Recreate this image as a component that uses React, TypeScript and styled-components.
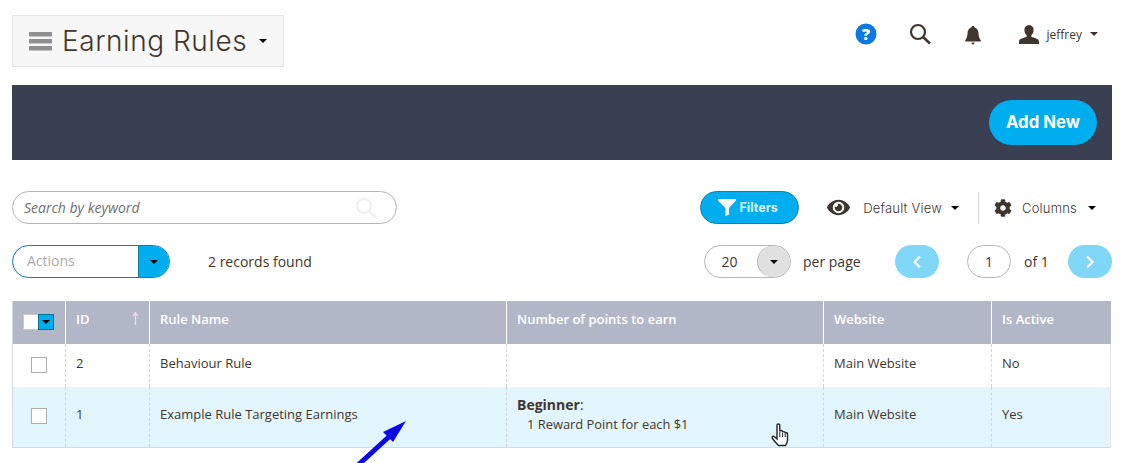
import React from 'react';
import styled, { createGlobalStyle } from 'styled-components';
import { FaCog, FaEye } from 'react-icons/fa';

const GlobalStyle = createGlobalStyle`
  html, body {
    margin: 0;
    padding: 0;
    background: #fff;
    overflow: hidden;
  }
  body {
    font-family: "Open Sans", "Liberation Sans", sans-serif;
    color: #41362f;
  }
  * { box-sizing: border-box; }
`;

const columns = [52, 84, 357, 317, 168, 120];

function Caret({ size = 5, color = '#000' }: { size?: number; color?: string }) {
  return (
    <svg width={size * 2} height={size} viewBox="0 0 10 5" style={{ display: 'block', flex: 'none' }}>
      <path d="M0 0h10L5 5z" fill={color} />
    </svg>
  );
}

export default function App() {
  return (
    <>
      <GlobalStyle />
      <Page>
        <Header>
          <TitleBox>
            <svg width="23" height="20" viewBox="0 0 23 20">
              <path d="M0 1h23v4.500H0zM0 8h23v4.500H0zM0 15h23v4.500H0z" fill="#8f8f8f" />
            </svg>
            <Title>Earning Rules</Title>
            <Caret size={4} />
          </TitleBox>
          <HeaderTools>
            <svg width="22" height="22" viewBox="0 0 22 22">
              <circle cx="11" cy="11" r="10.500" fill="#0b78e3" />
              <text x="11" y="16.500" textAnchor="middle" fontSize="16" fontWeight="800" fontFamily="Open Sans" fill="#fff">?</text>
            </svg>
            <SearchTool>
              <svg width="22" height="22" viewBox="0 0 22 22" fill="none" stroke="#41362f">
                <circle cx="9" cy="9" r="7" strokeWidth="2.200" />
                <path d="M14 14l7 6.500" strokeWidth="2.600" />
              </svg>
            </SearchTool>
            <BellTool>
              <svg width="16" height="19" viewBox="0 0 16 19" fill="#41362f">
                <path d="M8 0c1 0 1.600.6 1.600 1.600C12.200 2.400 13.400 4.600 13.500 7.500c.1 3 .8 5 2.300 6.700V15.500H.2v-1.300C1.700 12.500 2.400 10.500 2.500 7.500 2.600 4.600 3.800 2.400 6.400 1.600 6.400.6 7 0 8 0z" />
                <path d="M6.500 16.500h3C9.500 17.700 8.800 18.500 8 18.500s-1.500-.8-1.500-2z" />
              </svg>
            </BellTool>
            <UserTool>
              <svg width="20" height="19" viewBox="0 0 20 19" fill="#41362f">
                <path d="M10 0c3 0 4.600 2.200 4.600 5 0 2.300-1 4.300-2.300 5.300v1.500c2.700 1.200 7.700 1.600 7.700 4.700V19H0v-2.500c0-3.100 5-3.500 7.700-4.700v-1.500C6.400 9.300 5.400 7.300 5.400 5 5.400 2.200 7 0 10 0z" />
              </svg>
              <UserName>jeffrey</UserName>
              <Caret size={4} color="#41362f" />
            </UserTool>
          </HeaderTools>
        </Header>

        <ActionBar>
          <AddButton>Add New</AddButton>
        </ActionBar>

        <FilterRow>
          <SearchBox>
            <SearchText>Search by keyword</SearchText>
            <svg width="22" height="22" viewBox="0 0 22 22" fill="none" stroke="#f0f1f3">
              <circle cx="9" cy="9" r="7" strokeWidth="2.600" />
              <path d="M14 14l6.500 6.500" strokeWidth="3" />
            </svg>
          </SearchBox>
          <FilterTools>
            <FiltersButton>
              <svg width="18" height="17" viewBox="0 0 18 17" fill="#fff">
                <path d="M0 0h18v1.500L11 9v6.500L7.500 17V9L0 1.500z" />
              </svg>
              Filters
            </FiltersButton>
            <ViewSelect>
              <FaEye size={23} color="#41362f" />
              <ToolLabel>Default View</ToolLabel>
              <Caret size={4} />
            </ViewSelect>
            <ToolDivider />
            <ColumnsSelect>
              <FaCog size={18} color="#41362f" />
              <ToolLabel>Columns</ToolLabel>
              <Caret size={4} />
            </ColumnsSelect>
          </FilterTools>
        </FilterRow>

        <PagerRow>
          <ActionsSelect>
            <ActionsLabel>Actions</ActionsLabel>
            <ActionsButton>
              <Caret size={4} />
            </ActionsButton>
          </ActionsSelect>
          <RecordsText>2 records found</RecordsText>
          <Pager>
            <PerPage>
              <PerPageValue>20</PerPageValue>
              <PerPageButton>
                <Caret size={4} />
              </PerPageButton>
            </PerPage>
            <PerPageLabel>per page</PerPageLabel>
            <PageButton>
              <svg width="10" height="14" viewBox="0 0 10 14" fill="none" stroke="#fff" strokeWidth="2.200">
                <path d="M8 1.500L2.500 7 8 12.500" />
              </svg>
            </PageButton>
            <PageInput>1</PageInput>
            <PageTotal>of 1</PageTotal>
            <PageButton>
              <svg width="10" height="14" viewBox="0 0 10 14" fill="none" stroke="#fff" strokeWidth="2.200">
                <path d="M2 1.500L7.500 7 2 12.500" />
              </svg>
            </PageButton>
          </Pager>
        </PagerRow>

        <Grid>
          <colgroup>
            {columns.map((width, i) => (
              <col key={i} style={{ width }} />
            ))}
          </colgroup>
          <thead>
            <tr>
              <HeadCell>
                <MassSelect>
                  <MassBox />
                  <MassButton>
                    <Caret size={4} />
                  </MassButton>
                </MassSelect>
              </HeadCell>
              <HeadCell>
                <IdHead>
                  ID
                  <svg width="7" height="14" viewBox="0 0 7 14" fill="none" stroke="#f9d9e4" strokeWidth="1.200">
                    <path d="M3.500 13V1M1 4l2.500-3L6 4" />
                  </svg>
                </IdHead>
              </HeadCell>
              <HeadCell>Rule Name</HeadCell>
              <HeadCell>Number of points to earn</HeadCell>
              <HeadCell>Website</HeadCell>
              <HeadCell>Is Active</HeadCell>
            </tr>
          </thead>
          <tbody>
            <Row $height={43}>
              <Cell><CheckBox /></Cell>
              <Cell>2</Cell>
              <Cell>Behaviour Rule</Cell>
              <Cell />
              <Cell>Main Website</Cell>
              <Cell>No</Cell>
            </Row>
            <Row $height={60} $hover>
              <Cell><CheckBox /></Cell>
              <Cell>1</Cell>
              <Cell>Example Rule Targeting Earnings</Cell>
              <Cell>
                <TierName><strong>Beginner</strong>:</TierName>
                <TierRule>1 Reward Point for each $1</TierRule>
              </Cell>
              <Cell>Main Website</Cell>
              <Cell>Yes</Cell>
            </Row>
          </tbody>
        </Grid>

        <BlueArrow width="60" height="50" viewBox="0 0 60 50">
          <path d="M0 47L36 14" stroke="#0a0ae6" strokeWidth="5" />
          <path d="M50 1L27 12l10 10z" fill="#0a0ae6" />
        </BlueArrow>
        <HandCursor width="19" height="25" viewBox="0 0 19 25">
          <path
            d="M6 2.500c0-2 2.800-2 2.800 0v6c.2-1.400 2.600-1.400 2.800 0v1c.2-1.200 2.400-1.200 2.600 0.200v.8c.3-1.100 2.300-1 2.300.5v6c0 2.500-1 3.700-2 5.500H7.500C5.500 20.500 3.500 18.500 1.500 15.500c-1-1.500.7-3 2-1.800L6 16z"
            fill="#fff"
            stroke="#20242c"
            strokeWidth="1.400"
          />
          <path d="M8.800 9v5M11.600 10v4M14.200 11v3" fill="none" stroke="#20242c" strokeWidth="1" />
        </HandCursor>
      </Page>
    </>
  );
}

const Page = styled.div`
  position: relative;
  width: 1127px;
  height: 463px;
  padding: 15px 15px 0 12px;
  overflow: hidden;
`;

const Header = styled.header`
  display: flex;
  justify-content: space-between;
  align-items: flex-start;
  height: 52px;
`;

const TitleBox = styled.div`
  width: 272px;
  height: 52px;
  display: flex;
  align-items: center;
  padding-left: 16px;
  background: #f7f7f7;
  border: 1px solid #e3e3e3;
`;

const Title = styled.h1`
  margin: 0 12px 0 10px;
  font-family: Inter, "Noto Sans", sans-serif;
  font-size: 28px;
  font-weight: 300;
  line-height: 1;
  letter-spacing: 0.55px;
  color: #41362f;
`;

const HeaderTools = styled.div`
  display: flex;
  align-items: center;
  height: 38px;
  padding-right: 14px;
`;

const SearchTool = styled.span`
  display: block;
  height: 22px;
  margin-left: 32px;
`;

const BellTool = styled.span`
  display: block;
  height: 19px;
  margin-left: 34px;
  padding-top: 1px;
`;

const UserTool = styled.div`
  display: flex;
  align-items: center;
  margin-left: 38px;
`;

const UserName = styled.span`
  margin: 0 8px;
  font-size: 12px;
  color: #41362f;
`;

const ActionBar = styled.div`
  height: 75px;
  margin-top: 18px;
  display: flex;
  justify-content: flex-end;
  align-items: center;
  padding-right: 15px;
  background: #3b3f52;
`;

const AddButton = styled.button`
  width: 108px;
  height: 45px;
  padding: 0 0 1px;
  border: 0;
  border-radius: 23px;
  background: #00aeef;
  color: #fff;
  font-family: Inter, "Noto Sans", sans-serif;
  font-size: 16.800px;
  font-weight: 700;
`;

const FilterRow = styled.div`
  display: flex;
  justify-content: space-between;
  align-items: center;
  height: 33px;
  margin-top: 31px;
`;

const SearchBox = styled.div`
  width: 385px;
  height: 33px;
  display: flex;
  justify-content: space-between;
  align-items: center;
  padding: 0 19px 0 11px;
  border: 1px solid #b5b5b5;
  border-radius: 17px;
`;

const SearchText = styled.span`
  font-size: 14px;
  font-style: italic;
  color: #6f6f75;
`;

const FilterTools = styled.div`
  display: flex;
  align-items: center;
  padding-right: 16px;
`;

const FiltersButton = styled.button`
  width: 99px;
  height: 33px;
  display: flex;
  justify-content: center;
  align-items: center;
  gap: 4px;
  padding: 0 4px 0 0;
  border: 1px solid #0b7fb0;
  border-radius: 17px;
  background: #00aeef;
  color: #d8f3fd;
  font-family: Inter, "Noto Sans", sans-serif;
  font-size: 12.500px;
  font-weight: 700;
`;

const ViewSelect = styled.div`
  display: flex;
  align-items: center;
  margin-left: 28px;
  & > span { margin: 0 9px 0 13px; }
`;

const ToolLabel = styled.span`
  font-family: Inter, "Noto Sans", sans-serif;
  font-size: 13px;
  font-weight: 300;
  letter-spacing: 0.2px;
  color: #41362f;
`;

const ToolDivider = styled.span`
  width: 1px;
  height: 32px;
  margin: 0 15px 0 19px;
  background: #d5d5d5;
`;

const ColumnsSelect = styled.div`
  display: flex;
  align-items: center;
  & > span { margin: 0 11px 0 10px; }
`;

const PagerRow = styled.div`
  display: flex;
  align-items: center;
  height: 33px;
  margin-top: 21px;
`;

const ActionsSelect = styled.div`
  width: 158px;
  height: 33px;
  display: flex;
  border: 1px solid #0b7fa8;
  border-radius: 17px;
  overflow: hidden;
`;

const ActionsLabel = styled.span`
  flex: 1;
  padding-left: 14px;
  font-size: 14px;
  line-height: 30px;
  color: #a9a9ad;
`;

const ActionsButton = styled.span`
  width: 31px;
  display: flex;
  justify-content: center;
  align-items: center;
  background: #00aeef;
  border-left: 1px solid #0b7fa8;
`;

const RecordsText = styled.span`
  margin-left: 38px;
  font-size: 14px;
  color: #41362f;
`;

const Pager = styled.div`
  display: flex;
  align-items: center;
  margin-left: auto;
`;

const PerPage = styled.div`
  width: 87px;
  height: 33px;
  display: flex;
  border: 1px solid #b5b5b5;
  border-radius: 17px;
  overflow: hidden;
`;

const PerPageValue = styled.span`
  flex: 1;
  text-align: center;
  padding-right: 3px;
  font-size: 14px;
  line-height: 31px;
  color: #41362f;
`;

const PerPageButton = styled.span`
  width: 33px;
  display: flex;
  justify-content: center;
  align-items: center;
  background: #e0e0e0;
  border-left: 1px solid #b5b5b5;
  border-radius: 17px;
`;

const PerPageLabel = styled.span`
  width: 92px;
  margin-left: 12px;
  font-size: 14px;
  color: #41362f;
`;

const PageButton = styled.button`
  width: 44px;
  height: 33px;
  display: flex;
  justify-content: center;
  align-items: center;
  padding: 0;
  border: 0;
  border-radius: 17px;
  background: #80d6f7;
`;

const PageInput = styled.span`
  width: 44px;
  height: 33px;
  margin-left: 28px;
  border: 1px solid #b5b5b5;
  border-radius: 17px;
  text-align: center;
  font-size: 14px;
  line-height: 31px;
  color: #41362f;
`;

const PageTotal = styled.span`
  width: 44px;
  margin-left: 13px;
  font-size: 14px;
  color: #41362f;
`;

const Grid = styled.table`
  width: 1099px;
  margin-top: 23px;
  border-collapse: separate;
  border-spacing: 0;
  table-layout: fixed;
  border-bottom: 1px solid #d5d8df;
  border-left: 1px solid #d5d8df;
`;

const HeadCell = styled.th`
  height: 43px;
  padding: 0 10px 7px;
  background: #b2b7c8;
  border-left: 1px solid #fff;
  color: #fff;
  font-size: 13px;
  font-weight: 600;
  text-align: left;
  &:first-child { border-left: 0; padding-bottom: 1px; }
`;

const IdHead = styled.span`
  display: flex;
  justify-content: space-between;
  align-items: center;
`;

const MassSelect = styled.span`
  display: flex;
  width: 31px;
  height: 16px;
`;

const MassBox = styled.span`
  flex: 1;
  background: #fff;
  border: 1px solid #c8c8c8;
  border-right: 0;
`;

const MassButton = styled.span`
  width: 16px;
  display: flex;
  justify-content: center;
  align-items: center;
  background: #00aeef;
  border: 1px solid #0b6f98;
`;

const Row = styled.tr<{ $height: number; $hover?: boolean }>`
  height: ${({ $height }) => $height}px;
  background: ${({ $hover }) => ($hover ? '#e2f5fd' : '#fff')};
`;

const Cell = styled.td`
  padding: 0 10px 6px;
  border-left: 1px dashed #d5d5d5;
  font-size: 13px;
  line-height: 18px;
  color: #41362f;
  &:first-child { border-left: 0; padding: 0 0 2px 18px; }
  &:last-child { border-right: 1px solid #e3e5ea; }
`;

const CheckBox = styled.span`
  display: block;
  width: 16px;
  height: 16px;
  background: #fff;
  border: 1px solid #adadad;
`;

const TierName = styled.div`
  font-size: 14px;
  strong { font-weight: 700; }
`;

const TierRule = styled.div`
  margin-top: 1px;
  padding-left: 10px;
  font-size: 12.900px;
`;

const BlueArrow = styled.svg`
  position: absolute;
  left: 356px;
  top: 420px;
`;

const HandCursor = styled.svg`
  position: absolute;
  left: 771px;
  top: 423px;
`;
